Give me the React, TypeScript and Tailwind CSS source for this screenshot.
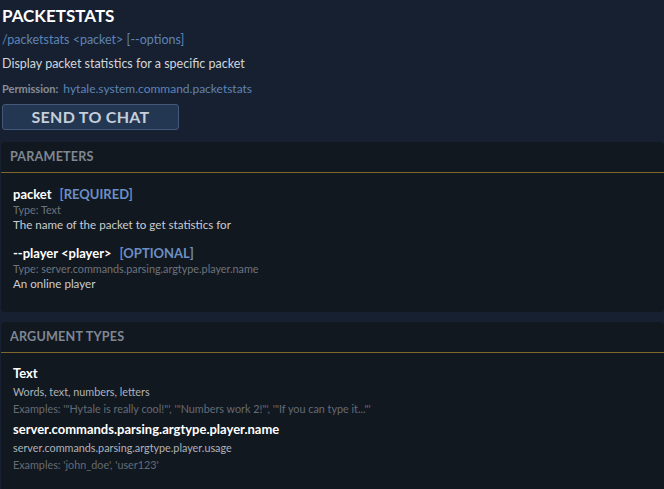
import React from 'react';

const params = [
  {
    name: 'packet',
    tag: '[REQUIRED]',
    type: 'Type: Text',
    desc: 'The name of the packet to get statistics for',
  },
  {
    name: '--player <player>',
    tag: '[OPTIONAL]',
    type: 'Type: server.commands.parsing.argtype.player.name',
    desc: 'An online player',
  },
];

const argTypes = [
  {
    name: 'Text',
    usage: 'Words, text, numbers, letters',
    examples: 'Examples: \'"Hytale is really cool!"\', \'"Numbers work 2!"\', \'"If you can type it..."\'',
  },
  {
    name: 'server.commands.parsing.argtype.player.name',
    usage: 'server.commands.parsing.argtype.player.usage',
    examples: "Examples: 'john_doe', 'user123'",
  },
];

function Section({ title, children }: { title: string; children: React.ReactNode }) {
  return (
    <section className="ml-px rounded-sm bg-[#121820]">
      <div className="h-[31px] border-b border-[#7d672b] px-[9px] pt-[8px] text-[12.6px] font-bold leading-[14px] tracking-[0.2px] text-[#7f8792]">
        {title}
      </div>
      {children}
    </section>
  );
}

export default function App() {
  return (
    <div className="h-[489px] overflow-hidden bg-[#172030] font-['Lato',sans-serif]">
      <div className="px-[2px] pt-[6px]">
        <h1 className="text-[17px] font-bold leading-[20px] text-white">PACKETSTATS</h1>
        <div className="mt-[6px] text-[12.5px] leading-[16px] text-[#5d84b6]">/packetstats &lt;packet&gt; [--options]</div>
        <p className="mt-[8px] text-[12.5px] leading-[16px] text-[#d2d6dc]">Display packet statistics for a specific packet</p>
        <div className="mt-[9px] flex items-baseline gap-[5px] leading-[16px]">
          <span className="text-[11px] font-bold text-[#858d98]">Permission:</span>
          <span className="text-[12px] text-[#5d84b6]">hytale.system.command.packetstats</span>
        </div>
        <button className="mt-[7px] flex h-[26px] w-[177px] items-center justify-center rounded-[3px] border border-[#43597a] bg-[#243752] text-[16px] font-bold tracking-[0.3px] text-[#c5cfdb]">
          SEND TO CHAT
        </button>
      </div>

      <div className="mt-[12px]">
        <Section title="PARAMETERS">
          <div className="px-[12px] pb-[21px] pt-[13px]">
            {params.map((p, i) => (
              <div key={p.name} className={i > 0 ? 'mt-[13px]' : ''}>
                <div className="flex items-baseline gap-[8px] text-[13px] font-bold leading-[17px]">
                  <span className="text-white">{p.name}</span>
                  <span className="text-[#6b8fc4]">{p.tag}</span>
                </div>
                <div className="text-[10.8px] leading-[14px] text-[#6c737d]">{p.type}</div>
                <div className="text-[11.6px] leading-[15px] text-[#c9cdd3]">{p.desc}</div>
              </div>
            ))}
          </div>
        </Section>
      </div>

      <div className="mt-[10px]">
        <Section title="ARGUMENT TYPES">
          <div className="px-[12px] pb-[20px] pt-[12px]">
            {argTypes.map((a, i) => (
              <div key={a.name} className={i > 0 ? 'mt-[4px]' : ''}>
                <div className="text-[13px] font-bold leading-[17px] text-white">{a.name}</div>
                <div className="mt-[1px] text-[10.8px] leading-[17px] text-[#aeb3ba]">{a.usage}</div>
                <div className="text-[10.8px] leading-[17px] text-[#646b75]">{a.examples}</div>
              </div>
            ))}
          </div>
        </Section>
      </div>
    </div>
  );
}
